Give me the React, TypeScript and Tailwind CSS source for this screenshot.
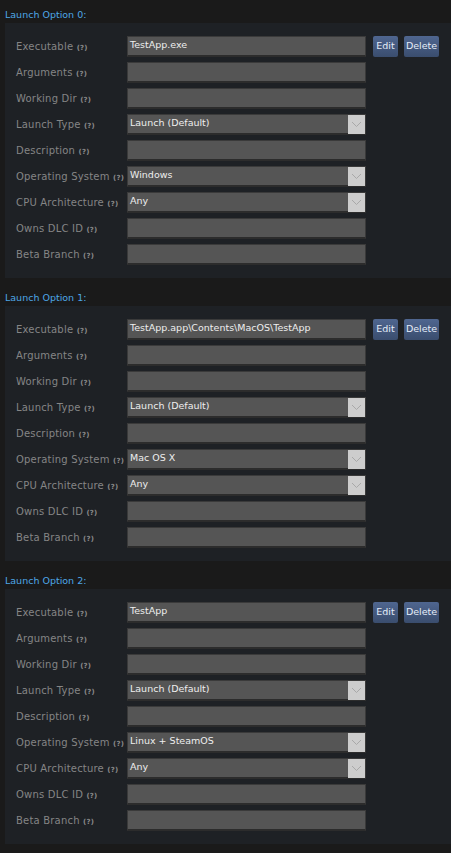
import React from "react";

type Field = { label: string; value?: string; select?: boolean };

const options: { title: string; exe: string; os: string }[] = [
  { title: "Launch Option 0:", exe: "TestApp.exe", os: "Windows" },
  { title: "Launch Option 1:", exe: "TestApp.app\\Contents\\MacOS\\TestApp", os: "Mac OS X" },
  { title: "Launch Option 2:", exe: "TestApp", os: "Linux + SteamOS" },
];

function Chevron() {
  return (
    <svg width="11" height="7" viewBox="0 0 11 7" fill="none">
      <path d="M1 1l4.5 4.5L10 1" stroke="#a8a8a8" strokeWidth="1" />
    </svg>
  );
}

function Row({ field, first }: { field: Field; first: boolean }) {
  return (
    <div className="flex items-center h-[26px]">
      <div className="w-[122px] pl-[11px] text-[10px] tracking-[0.2px] text-[#858585] whitespace-nowrap">
        {field.label}{" "}
        <span className="text-[7px] font-bold text-[#8a8a8a]">(?)</span>
      </div>
      <div className="relative w-[239px] h-[21px] bg-[#555555] border border-[#3a3a3a] border-b-2 border-b-[#2c2c2c] flex items-center">
        <span className="pl-[2px] text-[9.5px] text-[#eeeeee] whitespace-nowrap">{field.value}</span>
        {field.select && (
          <div className="absolute right-0 top-0 h-[19px] w-[17px] bg-[#cdcdcd] flex items-center justify-center">
            <Chevron />
          </div>
        )}
      </div>
      {first && (
        <div className="flex ml-[7px] gap-[6px]">
          <button className="h-[21px] w-[25px] rounded-[2px] bg-gradient-to-b from-[#4f6690] to-[#3a4d6e] text-[9.5px] text-[#e4ecf8]">
            Edit
          </button>
          <button className="h-[21px] w-[35px] rounded-[2px] bg-gradient-to-b from-[#4f6690] to-[#3a4d6e] text-[9.5px] text-[#e4ecf8]">
            Delete
          </button>
        </div>
      )}
    </div>
  );
}

export default function App() {
  return (
    <div
      className="w-[451px] h-[853px] bg-[#1a1a1a] overflow-hidden"
      style={{ fontFamily: '"DejaVu Sans", Verdana, sans-serif' }}
    >
      {options.map((o) => {
        const fields: Field[] = [
          { label: "Executable", value: o.exe },
          { label: "Arguments" },
          { label: "Working Dir" },
          { label: "Launch Type", value: "Launch (Default)", select: true },
          { label: "Description" },
          { label: "Operating System", value: o.os, select: true },
          { label: "CPU Architecture", value: "Any", select: true },
          { label: "Owns DLC ID" },
          { label: "Beta Branch" },
        ];
        return (
          <div key={o.title} className="mb-[5px]">
            <div className="h-[23px] pl-[5px] pt-[8px] text-[9.5px] leading-[13px] text-[#4ea7e6]">
              {o.title}
            </div>
            <div className="ml-[5px] bg-[#1e2125] pt-[10px] pb-[11px]">
              {fields.map((f, i) => (
                <Row key={f.label} field={f} first={i === 0} />
              ))}
            </div>
          </div>
        );
      })}
    </div>
  );
}
